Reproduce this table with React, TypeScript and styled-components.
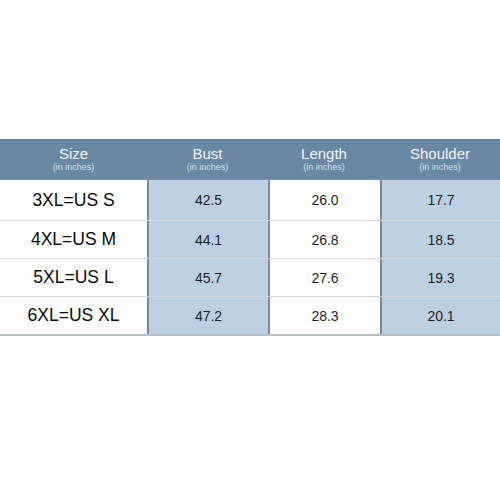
import styled, { createGlobalStyle } from 'styled-components';

const rows = [
  { size: '3XL=US S', bust: '42.5', length: '26.0', shoulder: '17.7' },
  { size: '4XL=US M', bust: '44.1', length: '26.8', shoulder: '18.5' },
  { size: '5XL=US L', bust: '45.7', length: '27.6', shoulder: '19.3' },
  { size: '6XL=US XL', bust: '47.2', length: '28.3', shoulder: '20.1' },
];

const headers = ['Size', 'Bust', 'Length', 'Shoulder'];

const GlobalStyle = createGlobalStyle`
  html, body {
    margin: 0;
    background: #ffffff;
  }
  body {
    font-family: "Liberation Sans", Arial, sans-serif;
  }
`;

const Page = styled.div`
  width: 500px;
  height: 500px;
  padding-top: 139px;
  box-sizing: border-box;
`;

const Table = styled.div`
  display: flex;
  flex-direction: column;
  border-bottom: 2px solid #b9bec4;
`;

const Row = styled.div`
  display: grid;
  grid-template-columns: 147px 121px 112px 120px;
`;

const HeadRow = styled(Row)`
  height: 40px;
  background: #6a87a3;
`;

const HeadCell = styled.div`
  display: flex;
  flex-direction: column;
  align-items: center;
  justify-content: center;
  color: #f2f5f8;
  padding-bottom: 2px;
`;

const HeadTitle = styled.span`
  font-size: 15px;
  line-height: 17px;
`;

const HeadSub = styled.span`
  font-size: 9px;
  line-height: 10px;
  color: #d6e0ea;
`;

const BodyRow = styled(Row)<{ $first?: boolean }>`
  height: ${(p) => (p.$first ? '40px' : '37px')};
  border-top: ${(p) => (p.$first ? '1px solid #7f93a6' : '1px solid #d6d8db')};
`;

const Cell = styled.div<{ $shaded?: boolean; $large?: boolean }>`
  display: flex;
  align-items: center;
  justify-content: center;
  background: ${(p) => (p.$shaded ? '#bdd0e2' : '#ffffff')};
  color: ${(p) => (p.$large ? '#0a0a0a' : '#1e1e1e')};
  font-size: ${(p) => (p.$large ? '17.5px' : '14px')};
  & + & {
    border-left: 2px solid #7c8a98;
  }
`;

export default function App() {
  return (
    <Page>
      <GlobalStyle />
      <Table>
        <HeadRow>
          {headers.map((h) => (
            <HeadCell key={h}>
              <HeadTitle>{h}</HeadTitle>
              <HeadSub>(in inches)</HeadSub>
            </HeadCell>
          ))}
        </HeadRow>
        {rows.map((r, i) => (
          <BodyRow key={r.size} $first={i === 0}>
            <Cell $large>{r.size}</Cell>
            <Cell $shaded>{r.bust}</Cell>
            <Cell>{r.length}</Cell>
            <Cell $shaded>{r.shoulder}</Cell>
          </BodyRow>
        ))}
      </Table>
    </Page>
  );
}
